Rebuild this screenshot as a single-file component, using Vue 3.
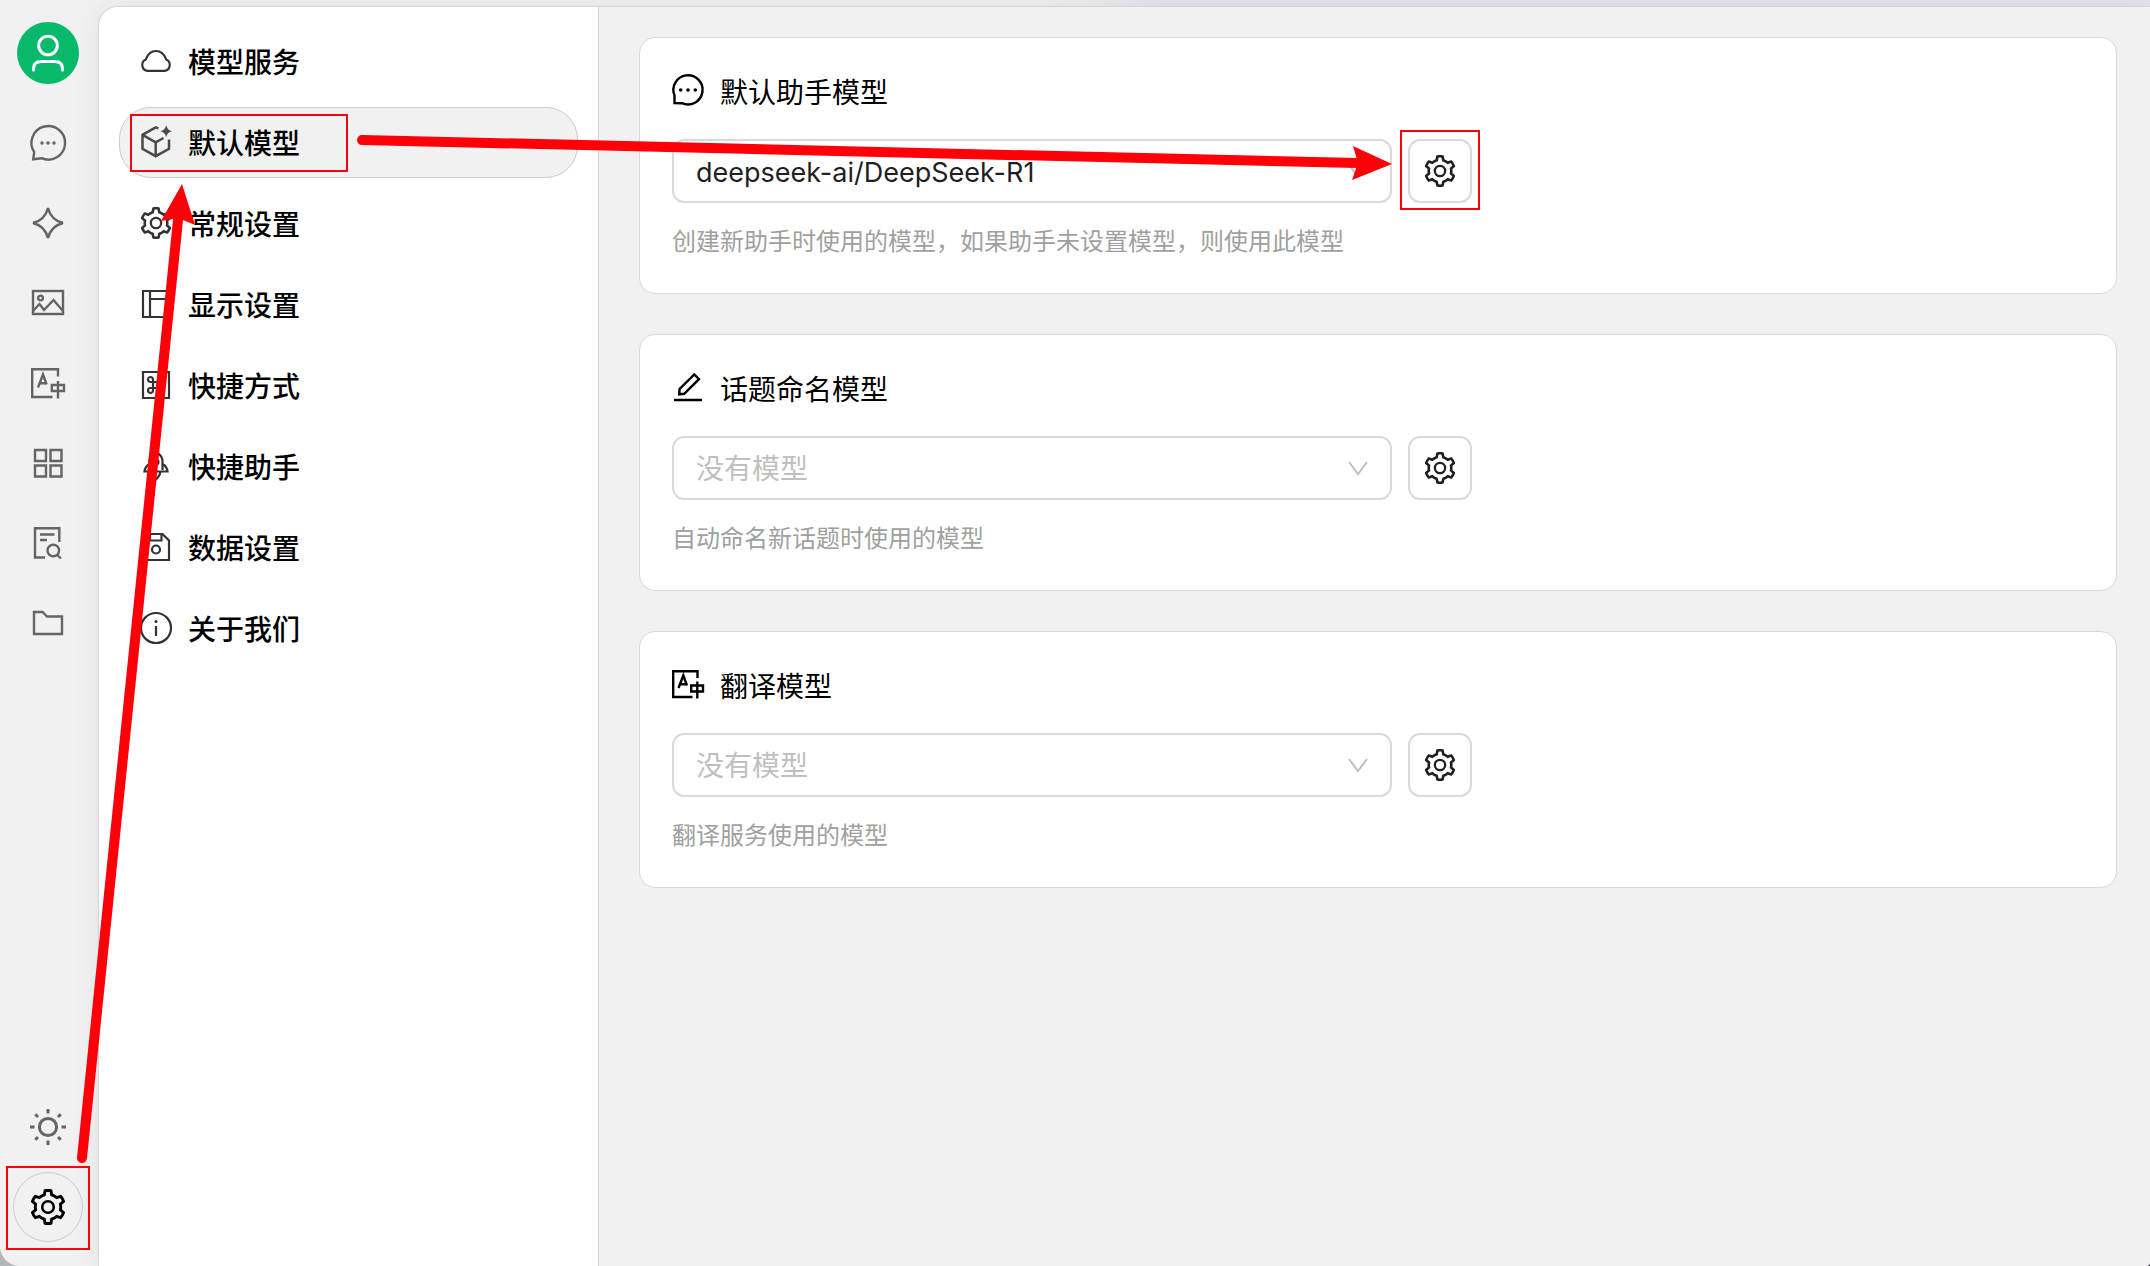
<script setup>
import { ref } from 'vue'

const gear =
  '<path fill="currentColor" stroke="none" d="M924.8 625.7l-65.5-56c3.1-19 4.7-38.4 4.7-57.8s-1.6-38.8-4.7-57.8l65.5-56a32.03 32.03 0 009.3-35.2l-.9-2.6a443.74 443.74 0 00-79.7-137.9l-1.8-2.1a32.12 32.12 0 00-35.1-9.5l-81.3 28.9c-30-24.6-63.5-44-99.7-57.6l-15.7-85a32.05 32.05 0 00-25.8-25.7l-2.7-.5c-52.1-9.4-106.9-9.4-159 0l-2.7.5a32.05 32.05 0 00-25.8 25.7l-15.8 85.4a351.86 351.86 0 00-99 57.4l-81.9-29.1a32 32 0 00-35.1 9.5l-1.8 2.1a446.02 446.02 0 00-79.7 137.9l-.9 2.6c-4.5 12.5-.8 26.5 9.3 35.2l66.3 56.6c-3.1 18.8-4.6 38-4.6 57.1 0 19.2 1.5 38.4 4.6 57.1L99 625.5a32.03 32.03 0 00-9.3 35.2l.9 2.6c18.1 50.4 44.9 96.9 79.7 137.9l1.8 2.1a32.12 32.12 0 0035.1 9.5l81.9-29.1c29.8 24.5 63.1 43.9 99 57.4l15.8 85.4a32.05 32.05 0 0025.8 25.7l2.7.5a449.4 449.4 0 00159 0l2.7-.5a32.05 32.05 0 0025.8-25.7l15.7-85a350 350 0 0099.7-57.6l81.3 28.9a32 32 0 0035.1-9.5l1.8-2.1c34.8-41.1 61.6-87.5 79.7-137.9l.9-2.6c4.5-12.3.8-26.3-9.3-35zM788.3 465.9c2.5 15.1 3.8 30.6 3.8 46.1s-1.3 31-3.8 46.1l-6.6 40.1 74.7 63.9a370.03 370.03 0 01-42.6 73.6L721 702.8l-31.4 25.8c-23.9 19.6-50.5 35-79.3 45.8l-38.1 14.3-17.9 97a377.5 377.5 0 01-85 0l-17.9-97.2-37.8-14.5c-28.5-10.8-55-26.2-78.7-45.7l-31.4-25.9-93.4 33.2c-17-22.9-31.2-47.6-42.6-73.6l75.5-64.5-6.5-40c-2.4-14.9-3.7-30.3-3.7-45.5 0-15.3 1.2-30.6 3.7-45.5l6.5-40-75.5-64.5c11.3-26.1 25.6-50.7 42.6-73.6l93.4 33.2 31.4-25.9c23.7-19.5 50.2-34.9 78.7-45.7l37.9-14.3 17.9-97.2c28.1-3.2 56.8-3.2 85 0l17.9 97 38.1 14.3c28.7 10.8 55.4 26.2 79.3 45.8l31.4 25.8 92.8-32.9c17 22.9 31.2 47.6 42.6 73.6L781.8 426l6.5 39.9z"/><circle cx="512" cy="512" r="144" stroke-width="64"/>'
const gearBox = '64 64 896 896'

const rail = [
  { label: '聊天', icon: '<path d="M4.2 27A16.8 16.8 0 1 1 11.5 33.2L3.2 34.3Z"/><g fill="currentColor" stroke="none"><circle cx="12" cy="18" r="1.7"/><circle cx="18" cy="18" r="1.7"/><circle cx="24" cy="18" r="1.7"/></g>' },
  { label: '助手', icon: '<path d="M18 3C20 11 25 16 33 18C25 20 20 25 18 33C16 25 11 20 3 18C11 16 16 11 18 3Z"/>' },
  { label: '绘图', icon: '<rect x="3" y="6" width="30" height="23"/><circle cx="10.5" cy="13" r="2.4"/><path d="M3 26L9.5 19L14 25L23.5 15L33 26"/>' },
  { label: '翻译', icon: '<path d="M28 11.5V4.2H2.2V32H22.5M8 22.5L13 9.5L16.6 19.5M9.6 18.3H17M21.8 20H34V26H21.8ZM28 16V33.5"/>' },
  { label: '小程序', icon: '<path d="M5 5H16V16H5ZM20.5 5H31.5V16H20.5ZM5 20.5H16V31.5H5ZM20.5 20.5H31.5V31.5H20.5Z"/>' },
  { label: '知识库', icon: '<path d="M29.3 17V3.2H5V32.5H15M10 9.5H24.5M10 15H17M27.3 30L31 33.5"/><circle cx="23.3" cy="25.5" r="5.8"/>' },
  { label: '文件', icon: '<path d="M4 7H12.5L17 11.5H32V29H4Z"/>' }
]
const sun =
  '<circle cx="18" cy="18" r="8.6" stroke-width="3"/><path stroke-width="3" d="M18 0V4.5M18 31.5V36M0 18H4.5M31.5 18H36M5.3 5.3L8 8M28 28L30.7 30.7M30.7 5.3L28 8M8 28L5.3 30.7"/>'

const menu = [
  { label: '模型服务', icon: '<path d="M7.2 25.8A6 6 0 0 1 5.8 14.4C7.6 9.4 11 6 16 6S24.400 9.400 26.200 14.400A6 6 0 0 1 24.800 25.800Z"/>' },
  { label: '默认模型', active: true, icon: '<path stroke-width="2.500" d="M18.300 2.400L15.700 1.300L2.500 8.800V22.800L15.700 30.200L29 22.800V13.500M2.500 8.800L15.700 16.300L23.500 12M15.700 16.300V30"/><path fill="currentColor" stroke="none" d="M26.200 -.8Q27.200 4 32 5.200Q27.200 6.400 26.200 11.200Q25.200 6.400 20.400 5.200Q25.200 4 26.200 -.8Z"/>' },
  { label: '常规设置', icon: gear, box: gearBox },
  { label: '显示设置', icon: '<path d="M3 3H29V29H3ZM10 3V29M10 11H29"/>' },
  { label: '快捷方式', icon: '<path d="M3 3H29V29H3Z"/><path d="M13 13H19V19H13ZM13 13H10.500A2.500 2.500 0 1 1 13 10.500ZM19 13V10.500A2.500 2.500 0 1 1 21.500 13ZM19 19H21.500A2.500 2.500 0 1 1 19 21.500ZM13 19V21.500A2.500 2.500 0 1 1 10.500 19Z"/>' },
  { label: '快捷助手', icon: '<path d="M9.500 20V10Q10.500 5 16 2Q21.500 5 22.500 10V20M9.500 14Q5 16.500 4.500 21.500H27.500Q27 16.500 22.500 14M11.500 21.500Q12 26 16 29.500Q20 26 20.500 21.500"/><circle cx="16" cy="12" r="2.500"/>' },
  { label: '数据设置', icon: '<path d="M3 3H22.500L29 9.500V29H3ZM10 3V9.500H21.500V3"/><circle cx="16" cy="18.500" r="4"/>' },
  { label: '关于我们', icon: '<circle cx="16" cy="16" r="15"/><path d="M16 14V24"/><circle cx="16" cy="9.500" r="1.500" fill="currentColor" stroke="none"/>' }
]

const cards = ref([
  {
    id: 'assistant',
    title: '默认助手模型',
    value: 'deepseek-ai/DeepSeek-R1',
    hint: '创建新助手时使用的模型，如果助手未设置模型，则使用此模型',
    icon: '<path d="M2.500 29V21.500A14.600 14.600 0 1 1 10 29.200Z"/><g fill="currentColor" stroke="none"><circle cx="8.700" cy="16" r="1.800"/><circle cx="16" cy="16" r="1.800"/><circle cx="23.300" cy="16" r="1.800"/></g>'
  },
  {
    id: 'topic',
    title: '话题命名模型',
    value: '',
    hint: '自动命名新话题时使用的模型',
    icon: '<path d="M2 29H30M7.200 23.300L7.600 18L22.300 3.500L27 8.200L12.200 22.800Z"/>'
  },
  {
    id: 'translate',
    title: '翻译模型',
    value: '',
    hint: '翻译服务使用的模型',
    icon: '<path d="M25.500 10V3.200H1.200V29H20.500M6.500 20L11.300 7.500L15 17.500M8.200 16.200H15.500M19.200 17.500H31V23.500H19.200ZM25.300 13.500V30.500"/>'
  }
])
</script>

<template>
  <div class="app">
    <nav class="rail" aria-label="主导航">
      <button class="avatar" aria-label="用户">
        <svg viewBox="0 0 62 62"><circle cx="31" cy="23.500" r="9.300" /><path d="M16.500 48V47Q16.500 39.500 24 39.500H38Q45.500 39.500 45.500 47V48" /></svg>
      </button>
      <button v-for="item in rail" :key="item.label" class="rail-button" :aria-label="item.label">
        <svg viewBox="0 0 36 36" v-html="item.icon"></svg>
      </button>
      <span class="spacer"></span>
      <button class="rail-button" aria-label="主题"><svg viewBox="0 0 36 36" v-html="sun"></svg></button>
      <button class="rail-button current" aria-label="设置"><svg :viewBox="gearBox" v-html="gear"></svg></button>
    </nav>

    <div class="panel">
      <nav class="menu" aria-label="设置菜单">
        <a v-for="item in menu" :key="item.label" href="#" :class="['menu-item', { active: item.active }]">
          <svg class="icon" :viewBox="item.box || '0 0 32 32'" v-html="item.icon"></svg>
          <span>{{ item.label }}</span>
        </a>
      </nav>

      <main class="content">
        <section v-for="card in cards" :key="card.id" class="card">
          <label class="title" :for="card.id">
            <svg class="icon" viewBox="0 0 32 32" v-html="card.icon"></svg>
            <span>{{ card.title }}</span>
          </label>
          <div class="row">
            <div class="select-box">
              <select :id="card.id" v-model="card.value" :class="{ empty: !card.value }">
                <option value="" disabled hidden>没有模型</option>
                <option value="deepseek-ai/DeepSeek-R1">deepseek-ai/DeepSeek-R1</option>
              </select>
              <svg class="chevron" viewBox="0 0 20 14"><path d="M1 1L10 13L19 1" /></svg>
            </div>
            <button class="config" :aria-label="card.title + '设置'">
              <svg class="icon" :viewBox="gearBox" v-html="gear"></svg>
            </button>
          </div>
          <p class="hint">{{ card.hint }}</p>
        </section>
      </main>
    </div>

    <svg class="guide" aria-hidden="true">
      <g class="frames">
        <rect x="131" y="115" width="216" height="56" />
        <rect x="1401" y="131" width="78" height="78" />
        <rect x="7" y="1167" width="82" height="82" />
      </g>
      <g class="shafts">
        <path d="M82 1158L178 220" />
        <path d="M362 140L1358 163" />
      </g>
      <path class="head" d="M182 184L195 225L178 218L161 221Z" />
      <path class="head" d="M1392 164L1353 146L1358 163L1352 180Z" />
    </svg>
  </div>
</template>

<style>
body {
  margin: 0;
  background: linear-gradient(90deg, #b4b7ba, #26303c);
}
</style>

<style scoped>
.app {
  position: relative;
  display: flex;
  min-height: 100vh;
  box-sizing: border-box;
  padding-top: 6px;
  overflow: hidden;
  border-radius: 0 0 4px 20px;
  background: linear-gradient(90deg, #f1f1f1 48%, #e2e6ec 54%);
  font-family: Inter, "Noto Sans CJK SC", sans-serif;
  color: #000;
}
svg {
  display: block;
  flex: none;
  fill: none;
  stroke: currentColor;
  stroke-width: 2;
  overflow: visible;
}
button {
  display: flex;
  align-items: center;
  justify-content: center;
  flex: none;
  box-sizing: border-box;
  padding: 0;
  border: 0;
  background: none;
  font: inherit;
}
.rail {
  display: flex;
  flex-direction: column;
  align-items: center;
  flex: none;
  gap: 10px;
  width: 98px;
  box-sizing: border-box;
  padding: 16px 2px 24px 0;
}
.avatar {
  width: 62px;
  height: 62px;
  margin-bottom: 14px;
  border-radius: 50%;
  background: #06b96b;
  color: #fff;
}
.avatar svg {
  width: 62px;
  height: 62px;
  stroke-width: 3;
  stroke-linecap: round;
}
.rail-button {
  width: 70px;
  height: 70px;
  border-radius: 50%;
  color: #646464;
}
.rail-button svg {
  width: 36px;
  height: 36px;
  stroke-width: 2.4;
}
.current {
  border: 1px solid #ccc;
  color: #000;
}
.spacer {
  flex: 1;
}
.panel {
  display: flex;
  flex: 1;
  min-width: 0;
  border: 1px solid #d4d4d4;
  border-width: 1px 0 0 1px;
  border-top-left-radius: 20px;
  background: #f1f1f1;
  box-shadow: 0 0 28px rgba(0, 0, 0, 0.07);
}
.icon {
  width: 32px;
  height: 32px;
}
.menu {
  display: flex;
  flex-direction: column;
  flex: none;
  gap: 10px;
  width: 500px;
  box-sizing: border-box;
  padding: 19px 20px 20px;
  border-right: 1px solid #d4d4d4;
  border-top-left-radius: 19px;
  background: #fff;
}
.menu-item {
  display: flex;
  align-items: center;
  gap: 16px;
  height: 71px;
  box-sizing: border-box;
  padding: 0 20px 2px;
  border: 1px solid transparent;
  border-radius: 32px;
  color: #000;
  font-size: 28px;
  font-weight: 500;
  text-decoration: none;
}
.menu-item .icon {
  color: #333;
  stroke-width: 2.2;
}
.menu-item.active {
  border-color: #ccc;
  background: #f1f1f1;
}
.menu-item.active .icon {
  color: #4a4a4a;
}
.content {
  display: flex;
  flex-direction: column;
  flex: 1;
  gap: 40px;
  min-width: 0;
  padding: 30px 33px 40px 40px;
}
.card {
  padding: 31px 32px 32px;
  border: 1px solid #d9d9d9;
  border-radius: 16px;
  background: #fff;
}
.title {
  display: flex;
  align-items: center;
  gap: 16px;
  height: 42px;
  margin-bottom: 28px;
  font-size: 28px;
}
.title span {
  padding-top: 2px;
}
.title .icon {
  stroke-width: 2.4;
}
.row {
  display: flex;
  gap: 16px;
}
.select-box {
  position: relative;
  width: 720px;
}
select {
  appearance: none;
  display: block;
  width: 100%;
  height: 64px;
  box-sizing: border-box;
  padding: 2px 56px 0 22px;
  border: 2px solid #d9d9d9;
  border-radius: 12px;
  background: #fff;
  color: #1f1f1f;
  font: inherit;
  font-size: 27px;
}
select.empty {
  color: #bfbfbf;
  font-size: 28px;
}
.chevron {
  position: absolute;
  top: 25px;
  right: 24px;
  width: 20px;
  height: 14px;
  color: #bfbfbf;
  pointer-events: none;
}
.config {
  width: 64px;
  height: 64px;
  border: 2px solid #d9d9d9;
  border-radius: 12px;
  background: #fff;
  color: #1f1f1f;
}
.menu-item .icon :deep(circle[r="144"]),
.config .icon :deep(circle),
.current :deep(circle) {
  stroke-width: 64px;
}
.hint {
  margin: 20px 0 0;
  color: #a0a0a0;
  font-size: 24px;
  line-height: 38px;
}
.guide {
  position: absolute;
  top: 0;
  left: 0;
  width: 100%;
  height: 100%;
  color: #ff0008;
  pointer-events: none;
}
.shafts {
  stroke-width: 10;
  stroke-linecap: round;
}
.head {
  fill: currentColor;
  stroke: none;
}
</style>
